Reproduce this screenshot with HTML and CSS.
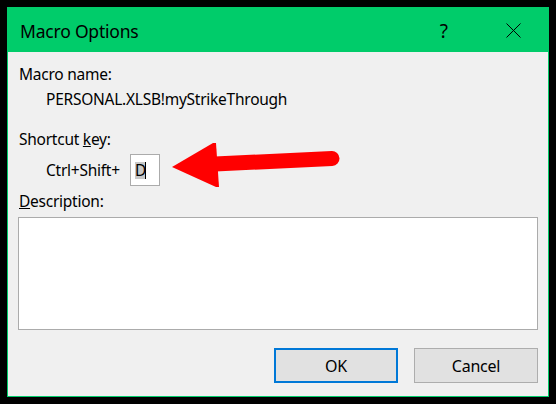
FILE: index.html
```html
<!DOCTYPE html>
<html lang="en">
<head>
<meta charset="utf-8">
<title>Macro Options</title>
<link rel="stylesheet" href="styles.css">
</head>
<body>
<div class="dialog">
  <div class="titlebar">
    <span class="title">Macro Options</span>
    <span class="help">?</span>
    <svg class="close" width="15" height="15" viewBox="0 0 15 15"><path d="M0.5 0.5 L14.5 14.5 M14.5 0.5 L0.5 14.5" stroke="#000" stroke-width="1" fill="none"/></svg>
  </div>
  <div class="body">
    <div class="line">Macro name:</div>
    <div class="line indent gap-s">PERSONAL.XLSB!myStrikeThrough</div>
    <div class="line gap-l">Shortcut <u>k</u>ey:</div>
    <div class="keyrow gap-s">
      <span class="ctrl">Ctrl+Shift+</span>
      <span class="keybox"><span class="sel">D</span><span class="caret"></span></span>
      <svg class="arrow" width="190" height="60" viewBox="0 0 190 60"><path d="M62 29 L179 23.5" stroke="#ff0000" stroke-width="15" stroke-linecap="round" fill="none"/><polygon points="19,32 60,8 63,8 66,52 63,52" fill="#ff0000"/></svg>
    </div>
    <div class="line gap-s"><u>D</u>escription:</div>
    <div class="desc"></div>
    <div class="buttons">
      <div class="btn ok">OK</div>
      <div class="btn">Cancel</div>
    </div>
  </div>
</div>
</body>
</html>
```
FILE: styles.css
```css
html, body {
  margin: 0;
  padding: 0;
  background: #000;
}
body {
  padding: 7px 0 0 7px;
  font-family: "Noto Sans", "Open Sans", sans-serif;
  color: #000;
}
.dialog {
  width: 540px;
  height: 388px;
  border: 1px solid #00cc6a;
  background: #f0f0f0;
  display: flex;
  flex-direction: column;
}
.titlebar {
  height: 44px;
  background: #00cc6a;
  display: flex;
  align-items: center;
  padding-left: 12px;
}
.title {
  font-size: 17.5px;
  letter-spacing: -0.2px;
  flex: 1;
  line-height: 20px;
  margin-top: 2px;
}
.help {
  font-size: 19px;
  line-height: 20px;
  margin-top: 2px;
  margin-right: 58px;
}
.close {
  margin-right: 27px;
  margin-top: 1px;
}
.body {
  padding: 12px 10px 0 11px;
  display: flex;
  flex-direction: column;
  font-size: 15.5px;
  letter-spacing: -0.25px;
  position: relative;
}
.line {
  line-height: 20px;
  height: 20px;
}
.indent { padding-left: 27px; }
.gap-s { margin-top: 5px; }
.gap-l { margin-top: 20px; }
.keyrow {
  height: 32px;
  display: flex;
  align-items: center;
  padding-left: 27px;
  position: relative;
}
.ctrl { width: 84px; }
.keybox {
  width: 24px;
  height: 30px;
  border: 1px solid #ababab;
  background: #fff;
  display: flex;
  align-items: center;
  padding-left: 4px;
  box-sizing: content-box;
}
.sel {
  background: #c8c8c8;
  height: 17px;
  line-height: 17px;
  width: 10px;
  display: inline-block;
  text-align: center;
}
.caret {
  width: 1px;
  height: 17px;
  background: #000;
}
.arrow {
  position: absolute;
  left: 134px;
  top: -19px;
}
.desc {
  margin-top: 6px;
  width: 518px;
  height: 111px;
  border: 1px solid #ababab;
  background: #fff;
  margin-left: -1px;
}
.buttons {
  margin-top: 18px;
  display: flex;
  justify-content: flex-end;
  gap: 16px;
}
.btn {
  width: 122px;
  height: 33px;
  border: 1px solid #adadad;
  background: #e1e1e1;
  display: flex;
  align-items: center;
  justify-content: center;
  font-size: 16px;
}
.btn.ok {
  width: 120px;
  height: 31px;
  border: 2px solid #0078d7;
}
```
